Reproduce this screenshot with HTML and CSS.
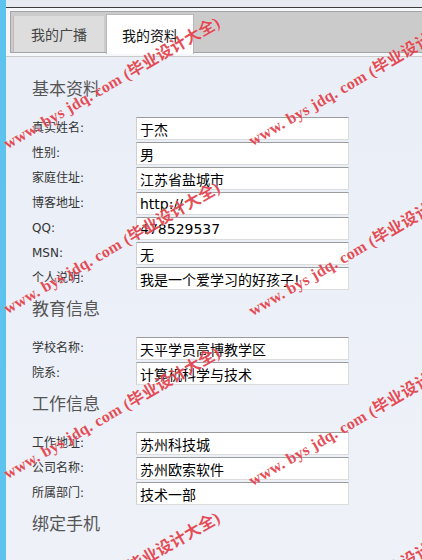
FILE: index.html
```html
<!DOCTYPE html>
<html lang="zh-CN">
<head>
<meta charset="utf-8">
<title>我的资料</title>
<link rel="stylesheet" href="styles.css">
</head>
<body>
<div class="page">
  <div class="sidebar"></div>
  <div class="main">
    <div class="topline"></div>
    <div class="tabwrap">
      <div class="tabbar">
        <div class="tab">我的广播</div>
        <div class="tab active">我的资料</div>
      </div>
    </div>
    <div class="content">
      <section class="section">
        <h2 class="heading">基本资料</h2>
        <div class="row"><span class="label">真实姓名:</span><input class="field" value="于杰" readonly></div>
        <div class="row"><span class="label">性别:</span><input class="field" value="男" readonly></div>
        <div class="row"><span class="label">家庭住址:</span><input class="field" value="江苏省盐城市" readonly></div>
        <div class="row"><span class="label">博客地址:</span><input class="field" value="http://" readonly></div>
        <div class="row"><span class="label">QQ:</span><input class="field" value="478529537" readonly></div>
        <div class="row"><span class="label">MSN:</span><input class="field" value="无" readonly></div>
        <div class="row"><span class="label">个人说明:</span><input class="field" value="我是一个爱学习的好孩子!" readonly></div>
      </section>
      <section class="section">
        <h2 class="heading">教育信息</h2>
        <div class="row"><span class="label">学校名称:</span><input class="field" value="天平学员高博教学区" readonly></div>
        <div class="row"><span class="label">院系:</span><input class="field" value="计算机科学与技术" readonly></div>
      </section>
      <section class="section">
        <h2 class="heading">工作信息</h2>
        <div class="row"><span class="label">工作地址:</span><input class="field" value="苏州科技城" readonly></div>
        <div class="row"><span class="label">公司名称:</span><input class="field" value="苏州欧索软件" readonly></div>
        <div class="row"><span class="label">所属部门:</span><input class="field" value="技术一部" readonly></div>
      </section>
      <section class="section last">
        <h2 class="heading">绑定手机</h2>
      </section>
    </div>
    <div class="footer-rule"></div>
  </div>
</div>
<div class="watermarks" aria-hidden="true">
  <span class="wm wm-l1">www. bys jdq. com (毕业设计大全)</span>
  <span class="wm wm-l2">www. bys jdq. com (毕业设计大全)</span>
  <span class="wm wm-l3">www. bys jdq. com (毕业设计大全)</span>
  <span class="wm wm-l4">www. bys jdq. com (毕业设计大全)</span>
  <span class="wm wm-r1">www. bys jdq. com (毕业设计大全)</span>
  <span class="wm wm-r2">www. bys jdq. com (毕业设计大全)</span>
  <span class="wm wm-r3">www. bys jdq. com (毕业设计大全)</span>
  <span class="wm wm-r4">www. bys jdq. com (毕业设计大全)</span>
</div>
</body>
</html>
```

FILE: styles.css
```css
* { box-sizing: border-box; }

html, body {
  margin: 0;
  padding: 0;
  height: 100%;
}

body {
  background: #ebf0f7;
  font-family: "DejaVu Sans", "Noto Sans CJK SC", sans-serif;
  color: #333;
  overflow: hidden;
  position: relative;
}

.page {
  display: flex;
  min-height: 560px;
}

.sidebar {
  width: 6px;
  flex: none;
  background: #5ec2ee;
}

.main {
  flex: 1;
  display: flex;
  flex-direction: column;
  background: linear-gradient(#e9eef7, #eef1f8);
}

.topline {
  height: 8px;
  background: #e6ebf2;
  border-bottom: 1px solid #3c3c3c;
}

.tabwrap {
  padding: 3px 0 3px 4px;
  background: #f5f7fa;
  border-bottom: 1px solid #c9c9c9;
}

.tabbar {
  display: flex;
  align-items: flex-end;
  gap: 2px;
  height: 42px;
  padding-left: 2px;
  background: #cbcbcb;
  border: 1px solid #a5a5a5;
  border-right: none;
}

.tab {
  width: 91px;
  height: 36px;
  display: flex;
  align-items: center;
  justify-content: center;
  background: #dddddd;
  border-left: 1px solid #c4b8bd;
  font-size: 14px;
  color: #444;
  font-family: "Noto Sans CJK SC", sans-serif;
}

.tab.active {
  width: 88px;
  height: 40px;
  margin-bottom: -2px;
  background: #ffffff;
  border: 1px solid #b8b8b8;
  border-bottom: none;
  color: #111;
}

.content {
  padding: 21px 0 0 26px;
}

.section {
  margin-bottom: 6px;
}

.section.last {
  margin-bottom: 0;
}

.heading {
  margin: 0 0 19px;
  height: 20px;
  line-height: 20px;
  font-size: 17px;
  font-weight: normal;
  color: #555;
  font-family: "Noto Sans CJK SC", sans-serif;
}

.row {
  display: flex;
  align-items: flex-start;
  height: 25px;
}

.label {
  width: 104px;
  flex: none;
  line-height: 23px;
  font-size: 12px;
  color: #333;
}

.field {
  width: 213px;
  height: 23px;
  margin: 0;
  padding: 0 3px;
  background: #fff;
  border: 1px solid #dcdcdc;
  border-top-color: #9c9c9c;
  border-left-color: #cfcfcf;
  font-family: "DejaVu Sans", "Noto Sans CJK SC", sans-serif;
  font-size: 14px;
  color: #000;
  outline: none;
}

.footer-rule {
  margin-top: 19px;
  height: 3px;
  border-top: 1px solid #a8a8a8;
  border-bottom: 1px solid #d0d0d0;
  background: #f7f7f7;
}

.watermarks {
  position: absolute;
  left: 0;
  top: 0;
  width: 422px;
  height: 560px;
  overflow: hidden;
  pointer-events: none;
}

.wm {
  position: absolute;
  white-space: nowrap;
  height: 20px;
  line-height: 20px;
  transform-origin: 0 50%;
  transform: rotate(-30deg);
  font-family: "Liberation Serif", "Noto Sans CJK SC", serif;
  font-weight: bold;
  font-size: 16px;
  letter-spacing: 0.3px;
  color: #e23b46;
  text-shadow: 0 0 1px #fff;
  opacity: 0.9;
}

.wm-l1 { left: 5px; top: 135px; }
.wm-l2 { left: 5px; top: 300px; }
.wm-l3 { left: 5px; top: 465px; }
.wm-l4 { left: 5px; top: 630px; }
.wm-r1 { left: 250px; top: 132px; }
.wm-r2 { left: 250px; top: 302px; }
.wm-r3 { left: 250px; top: 472px; }
.wm-r4 { left: 250px; top: 642px; }
```
